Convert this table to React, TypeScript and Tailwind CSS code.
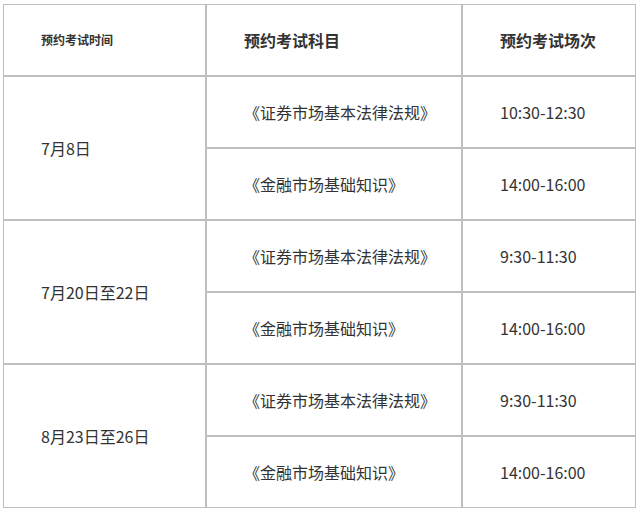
import React from "react";

const rows = [
  { date: "7月8日", items: [["《证券市场基本法律法规》", "10:30-12:30"], ["《金融市场基础知识》", "14:00-16:00"]] },
  { date: "7月20日至22日", items: [["《证券市场基本法律法规》", "9:30-11:30"], ["《金融市场基础知识》", "14:00-16:00"]] },
  { date: "8月23日至26日", items: [["《证券市场基本法律法规》", "9:30-11:30"], ["《金融市场基础知识》", "14:00-16:00"]] },
];

const cell = "border border-[#bfbfbf] h-[72px] pl-[37px] pr-2 align-middle text-left";

export default function App() {
  return (
    <div className="bg-white w-[642px] h-[512px] pt-[4px] pl-[3px] text-[#333333]" style={{ fontFamily: '"Noto Sans CJK SC", "Noto Sans", sans-serif' }}>
      <table className="table-fixed border-separate border-spacing-0 w-[633px]">
        <colgroup>
          <col className="w-[203px]" />
          <col className="w-[256px]" />
          <col className="w-[174px]" />
        </colgroup>
        <thead>
          <tr>
            <th className={`${cell} text-[12px] font-bold`}>预约考试时间</th>
            <th className={`${cell} text-[16px] font-bold`}>预约考试科目</th>
            <th className={`${cell} text-[16px] font-bold`}>预约考试场次</th>
          </tr>
        </thead>
        <tbody>
          {rows.map((r) =>
            r.items.map((it, i) => (
              <tr key={r.date + i}>
                {i === 0 && (
                  <td rowSpan={2} className={`${cell} text-[16px]`}>
                    {r.date}
                  </td>
                )}
                <td className={`${cell} text-[16px]`}>{it[0]}</td>
                <td className={`${cell} text-[16px]`}>{it[1]}</td>
              </tr>
            ))
          )}
        </tbody>
      </table>
    </div>
  );
}
